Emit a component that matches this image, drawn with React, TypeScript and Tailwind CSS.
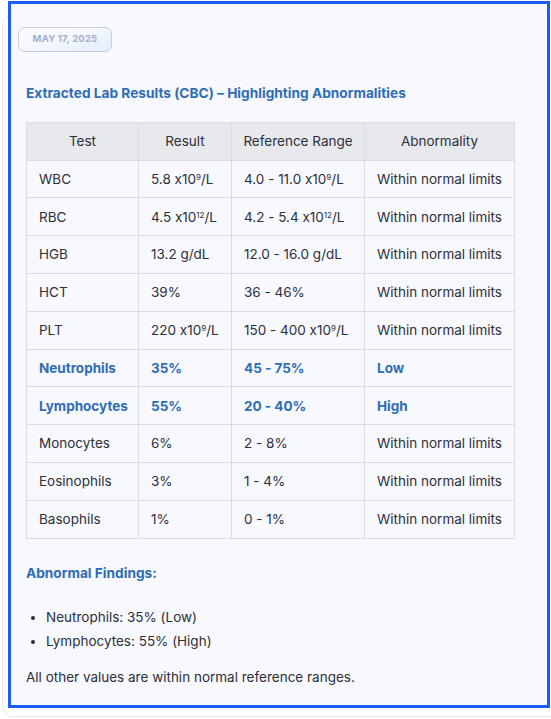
import React from "react";

const rows: { t: string; r: React.ReactNode; ref: React.ReactNode; a: string; hi?: boolean }[] = [
  { t: "WBC", r: <>5.8 x10<sup className="text-[8px]">9</sup>/L</>, ref: <>4.0 - 11.0 x10<sup className="text-[8px]">9</sup>/L</>, a: "Within normal limits" },
  { t: "RBC", r: <>4.5 x10<sup className="text-[8px]">12</sup>/L</>, ref: <>4.2 - 5.4 x10<sup className="text-[8px]">12</sup>/L</>, a: "Within normal limits" },
  { t: "HGB", r: "13.2 g/dL", ref: "12.0 - 16.0 g/dL", a: "Within normal limits" },
  { t: "HCT", r: "39%", ref: "36 - 46%", a: "Within normal limits" },
  { t: "PLT", r: <>220 x10<sup className="text-[8px]">9</sup>/L</>, ref: <>150 - 400 x10<sup className="text-[8px]">9</sup>/L</>, a: "Within normal limits" },
  { t: "Neutrophils", r: "35%", ref: "45 - 75%", a: "Low", hi: true },
  { t: "Lymphocytes", r: "55%", ref: "20 - 40%", a: "High", hi: true },
  { t: "Monocytes", r: "6%", ref: "2 - 8%", a: "Within normal limits" },
  { t: "Eosinophils", r: "3%", ref: "1 - 4%", a: "Within normal limits" },
  { t: "Basophils", r: "1%", ref: "0 - 1%", a: "Within normal limits" },
];

export default function App() {
  return (
    <div className="w-[551px] h-[719px] bg-white overflow-hidden pl-[2px] pt-[15px] [font-feature-settings:'calt'_0]" style={{ fontFamily: "Inter, 'Noto Sans', sans-serif" }}>
      <div className="w-[560px] h-[702px] rounded-[10px] border border-[#e6e8ec] bg-white">
        <div className="-mt-[15px] ml-[5px] w-[542px] h-[707px] border-[3px] border-[#1d5cf0] bg-[#f8f9fe] text-[#2c3038]">
          <div className="pt-[20px] pl-[7px]">
            <div className="inline-flex items-center h-[25px] w-[94px] justify-center rounded-[7px] border border-[#c7ccd6] bg-gradient-to-br from-[#f9fafe] via-[#f4f7fd] to-[#e3edfc] text-[9.5px] font-bold text-[#a6aecb] tracking-[0.2px]">
              MAY 17, 2025
            </div>
          </div>
          <div className="px-[15px]">
            <div className="mt-[32px] text-[13.7px] font-bold text-[#2f6db3] leading-[18px]">
              Extracted Lab Results (CBC) – Highlighting Abnormalities
            </div>
            <table className="mt-[20px] border-collapse text-[13.5px] w-[488px] table-fixed">
              <colgroup>
                <col className="w-[112px]" />
                <col className="w-[93px]" />
                <col className="w-[133px]" />
                <col className="w-[150px]" />
              </colgroup>
              <thead>
                <tr className="bg-[#e8e9ed] h-[38px]">
                  {["Test", "Result", "Reference Range", "Abnormality"].map((h) => (
                    <th key={h} className="border border-[#d9dce2] font-normal text-center text-[#2c3038]">{h}</th>
                  ))}
                </tr>
              </thead>
              <tbody>
                {rows.map((r) => (
                  <tr key={r.t} className={`h-[37.8px] ${r.hi ? "font-bold text-[#2f6db3]" : ""}`}>
                    <td className="border border-[#d9dce2] pl-[12px]">{r.t}</td>
                    <td className="border border-[#d9dce2] pl-[12px]">{r.r}</td>
                    <td className="border border-[#d9dce2] pl-[12px]">{r.ref}</td>
                    <td className="border border-[#d9dce2] pl-[12px] whitespace-nowrap">{r.a}</td>
                  </tr>
                ))}
              </tbody>
            </table>
            <div className="mt-[25px] text-[13.7px] font-bold text-[#2f6db3] leading-[18px]">Abnormal Findings:</div>
            <ul className="mt-[23px] list-disc pl-[20px] text-[13.5px] leading-[24px]">
              <li>Neutrophils: 35% (Low)</li>
              <li>Lymphocytes: 55% (High)</li>
            </ul>
            <div className="mt-[15px] text-[13.5px] leading-[18px]">All other values are within normal reference ranges.</div>
          </div>
        </div>
      </div>
    </div>
  );
}
